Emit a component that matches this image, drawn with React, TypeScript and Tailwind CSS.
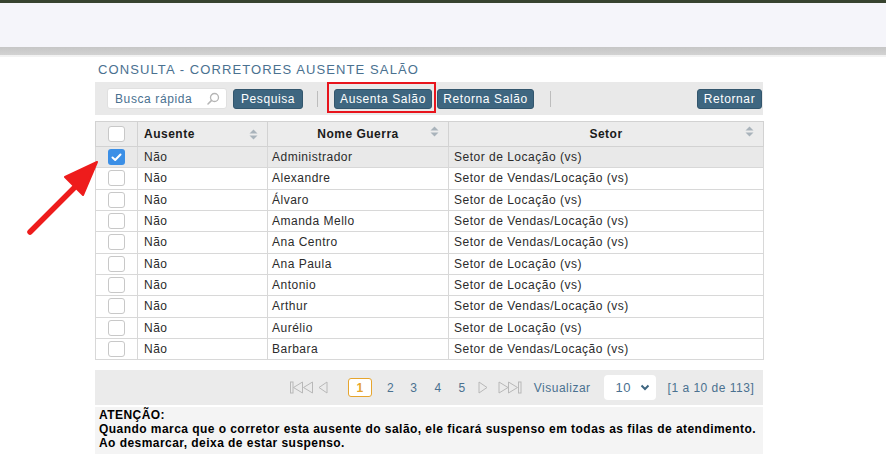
import React from "react";

const rows: [string, string, string][] = [
  ["Não", "Administrador", "Setor de Locação (vs)"],
  ["Não", "Alexandre", "Setor de Vendas/Locação (vs)"],
  ["Não", "Álvaro", "Setor de Locação (vs)"],
  ["Não", "Amanda Mello", "Setor de Vendas/Locação (vs)"],
  ["Não", "Ana Centro", "Setor de Vendas/Locação (vs)"],
  ["Não", "Ana Paula", "Setor de Locação (vs)"],
  ["Não", "Antonio", "Setor de Locação (vs)"],
  ["Não", "Arthur", "Setor de Vendas/Locação (vs)"],
  ["Não", "Aurélio", "Setor de Locação (vs)"],
  ["Não", "Barbara", "Setor de Vendas/Locação (vs)"],
];

function SortIcon() {
  return (
    <svg width="9" height="11" viewBox="0 0 9 11" className="shrink-0">
      <path d="M4.5 0.5 L8.5 4.5 H0.5 Z" fill="#a9b3bb" />
      <path d="M4.5 10.5 L8.5 6.5 H0.5 Z" fill="#a9b3bb" />
    </svg>
  );
}

function Box({ checked }: { checked?: boolean }) {
  return checked ? (
    <div className="w-[17px] h-[16px] rounded-[3px] bg-[#3b8fe6] flex items-center justify-center">
      <svg width="11" height="9" viewBox="0 0 11 9">
        <path d="M1.5 4.5 L4.2 7 L9.5 1.5" stroke="#fff" strokeWidth="2" fill="none" strokeLinecap="round" strokeLinejoin="round" />
      </svg>
    </div>
  ) : (
    <div className="w-[17px] h-[16px] rounded-[3px] bg-white border border-[#c8c8c8]" />
  );
}

function Btn({ children, w }: { children: React.ReactNode; w: string }) {
  return (
    <button className={`${w} h-[20px] rounded-[3px] bg-[#3e6680] border border-[#33566d] text-white text-[12px] leading-none tracking-[0.6px] flex items-center justify-center`}>
      {children}
    </button>
  );
}

export default function App() {
  return (
    <div className="relative w-[886px] h-[455px] bg-white overflow-hidden" style={{ fontFamily: '"Liberation Sans", Arial, sans-serif' }}>
      <div className="h-[3px] bg-[#37432f]" />
      <div className="h-[44px] bg-[#f5f5fa]" />
      <div className="h-[8px] bg-gradient-to-b from-[#c6c6c6] to-[#d2d2d2]" />
      <div className="h-[2px] bg-[#f2f2f2]" />

      <div className="ml-[95px] w-[668px]">
        <div className="pl-[3px] pt-[5px] h-[25px] text-[13px] leading-[15px] tracking-[1.1px] text-[#4a7190] whitespace-nowrap">
          CONSULTA - CORRETORES AUSENTE SALÃO
        </div>

        <div className="h-[33px] bg-[#e9e9e9] flex items-center pl-[12px] pr-[1px]">
          <div className="w-[120px] h-[21px] bg-white rounded-[3px] border border-[#e0e0e0] flex items-center pl-[7px] pr-[6px] justify-between">
            <span className="text-[12px] text-[#4a7190] tracking-[0.6px]">Busca rápida</span>
            <svg width="13" height="13" viewBox="0 0 13 13">
              <circle cx="7.5" cy="5.5" r="4" stroke="#b5b5b5" strokeWidth="1.3" fill="none" />
              <path d="M4.6 8.4 L1 12" stroke="#b5b5b5" strokeWidth="1.5" strokeLinecap="round" />
            </svg>
          </div>
          <div className="ml-[6px]">
            <Btn w="w-[70px]">Pesquisa</Btn>
          </div>
          <div className="ml-[14px] w-px h-[16px] bg-[#bdbdbd]" />
          <div className="ml-[16px] relative">
            <Btn w="w-[98px]">Ausenta Salão</Btn>
            <div className="absolute left-[-7px] top-[-7px] w-[109px] h-[31px] border-2 border-[#e8141c]" />
          </div>
          <div className="ml-[5px]">
            <Btn w="w-[97px]">Retorna Salão</Btn>
          </div>
          <div className="ml-[16px] w-px h-[16px] bg-[#bdbdbd]" />
          <div className="ml-auto">
            <Btn w="w-[65px]">Retornar</Btn>
          </div>
        </div>

        <table className="mt-[6px] w-[668px] border-collapse table-fixed text-[12px] text-[#2b2b2b] tracking-[0.5px]">
          <colgroup>
            <col className="w-[42px]" />
            <col className="w-[130px]" />
            <col className="w-[181px]" />
            <col className="w-[315px]" />
          </colgroup>
          <thead>
            <tr className="h-[25px] bg-[#ececec]">
              <th className="border border-[#d2d2d2] p-0">
                <div className="flex justify-center"><Box /></div>
              </th>
              <th className="border border-[#d2d2d2] p-0 font-bold text-[#1a1a1a]">
                <div className="flex items-center justify-between pl-[6px] pr-[9px]">
                  <span>Ausente</span>
                  <SortIcon />
                </div>
              </th>
              <th className="border border-[#d2d2d2] p-0 font-bold text-[#1a1a1a]">
                <div className="relative flex items-center justify-center">
                  <span>Nome Guerra</span>
                  <div className="absolute right-[9px] top-[1px]"><SortIcon /></div>
                </div>
              </th>
              <th className="border border-[#d2d2d2] p-0 font-bold text-[#1a1a1a]">
                <div className="relative flex items-center justify-center">
                  <span>Setor</span>
                  <div className="absolute right-[9px] top-[1px]"><SortIcon /></div>
                </div>
              </th>
            </tr>
          </thead>
          <tbody>
            {rows.map((r, i) => (
              <tr key={i} className={`h-[21.33px] ${i === 0 ? "bg-[#e9e9e9]" : "bg-white"}`}>
                <td className="border border-[#d8d8d8] p-0">
                  <div className="flex justify-center"><Box checked={i === 0} /></div>
                </td>
                <td className="border border-[#d8d8d8] py-0 pl-[6px]">{r[0]}</td>
                <td className="border border-[#d8d8d8] py-0 pl-[4px]">{r[1]}</td>
                <td className="border border-[#d8d8d8] py-0 pl-[5px]">{r[2]}</td>
              </tr>
            ))}
          </tbody>
        </table>

        <div className="mt-[10px] h-[35px] bg-[#ebebeb] flex items-center text-[12px] text-[#4a7190] tracking-[0.5px] whitespace-nowrap">
          <svg width="24" height="13" viewBox="0 0 24 13" className="ml-[195px]">
            <rect x="0.5" y="1" width="2.5" height="11" fill="none" stroke="#b8b8b8" />
            <path d="M12.5 1 L3.5 6.5 L12.5 12 Z" fill="none" stroke="#b8b8b8" />
            <path d="M22.5 1 L13.5 6.5 L22.5 12 Z" fill="none" stroke="#b8b8b8" />
          </svg>
          <svg width="10" height="13" viewBox="0 0 10 13" className="ml-[4px]">
            <path d="M9 1 L1 6.5 L9 12 Z" fill="none" stroke="#b8b8b8" />
          </svg>
          <div className="ml-[20px] w-[24px] h-[19px] rounded-[3px] border-[1.5px] border-[#e6a52e] bg-white flex items-center justify-center text-[#e6a52e] font-bold">1</div>
          <span className="ml-[15px]">2</span>
          <span className="ml-[16px]">3</span>
          <span className="ml-[17px]">4</span>
          <span className="ml-[17px]">5</span>
          <svg width="10" height="13" viewBox="0 0 10 13" className="ml-[12px]">
            <path d="M1 1 L9 6.5 L1 12 Z" fill="none" stroke="#b8b8b8" />
          </svg>
          <svg width="24" height="13" viewBox="0 0 24 13" className="ml-[10px]">
            <path d="M1 1 L10 6.5 L1 12 Z" fill="none" stroke="#b8b8b8" />
            <path d="M10.5 1 L19.5 6.5 L10.5 12 Z" fill="none" stroke="#b8b8b8" />
            <rect x="20.5" y="1" width="2.5" height="11" fill="none" stroke="#b8b8b8" />
          </svg>
          <span className="ml-[12px]">Visualizar</span>
          <div className="ml-[13px] w-[52px] h-[25px] bg-white rounded-[4px] flex items-center justify-between pl-[12px] pr-[6px]">
            <span className="text-[13px]">10</span>
            <svg width="10" height="7" viewBox="0 0 10 7">
              <path d="M1.5 1.5 L5 5 L8.5 1.5" stroke="#3e6680" strokeWidth="2" fill="none" />
            </svg>
          </div>
          <span className="ml-[12px]">[1 a 10 de 113]</span>
        </div>

        <div className="mt-[2px] bg-[#f4f4f4] pl-[4px] pt-px pb-[4px] text-[12px] leading-[14px] font-bold text-black tracking-[0.45px] whitespace-nowrap">
          <div>ATENÇÃO:</div>
          <div>Quando marca que o corretor esta ausente do salão, ele ficará suspenso em todas as filas de atendimento.</div>
          <div>Ao desmarcar, deixa de estar suspenso.</div>
        </div>
      </div>

      <svg className="absolute left-0 top-0" width="886" height="455" viewBox="0 0 886 455" pointerEvents="none">
        <path d="M30 232 L78 184" stroke="#ee1c1c" strokeWidth="5.5" strokeLinecap="round" />
        <path d="M97 162 L65 177 L83 195 Z" fill="#ee1c1c" stroke="#ee1c1c" strokeWidth="2" strokeLinejoin="round" />
      </svg>
    </div>
  );
}
